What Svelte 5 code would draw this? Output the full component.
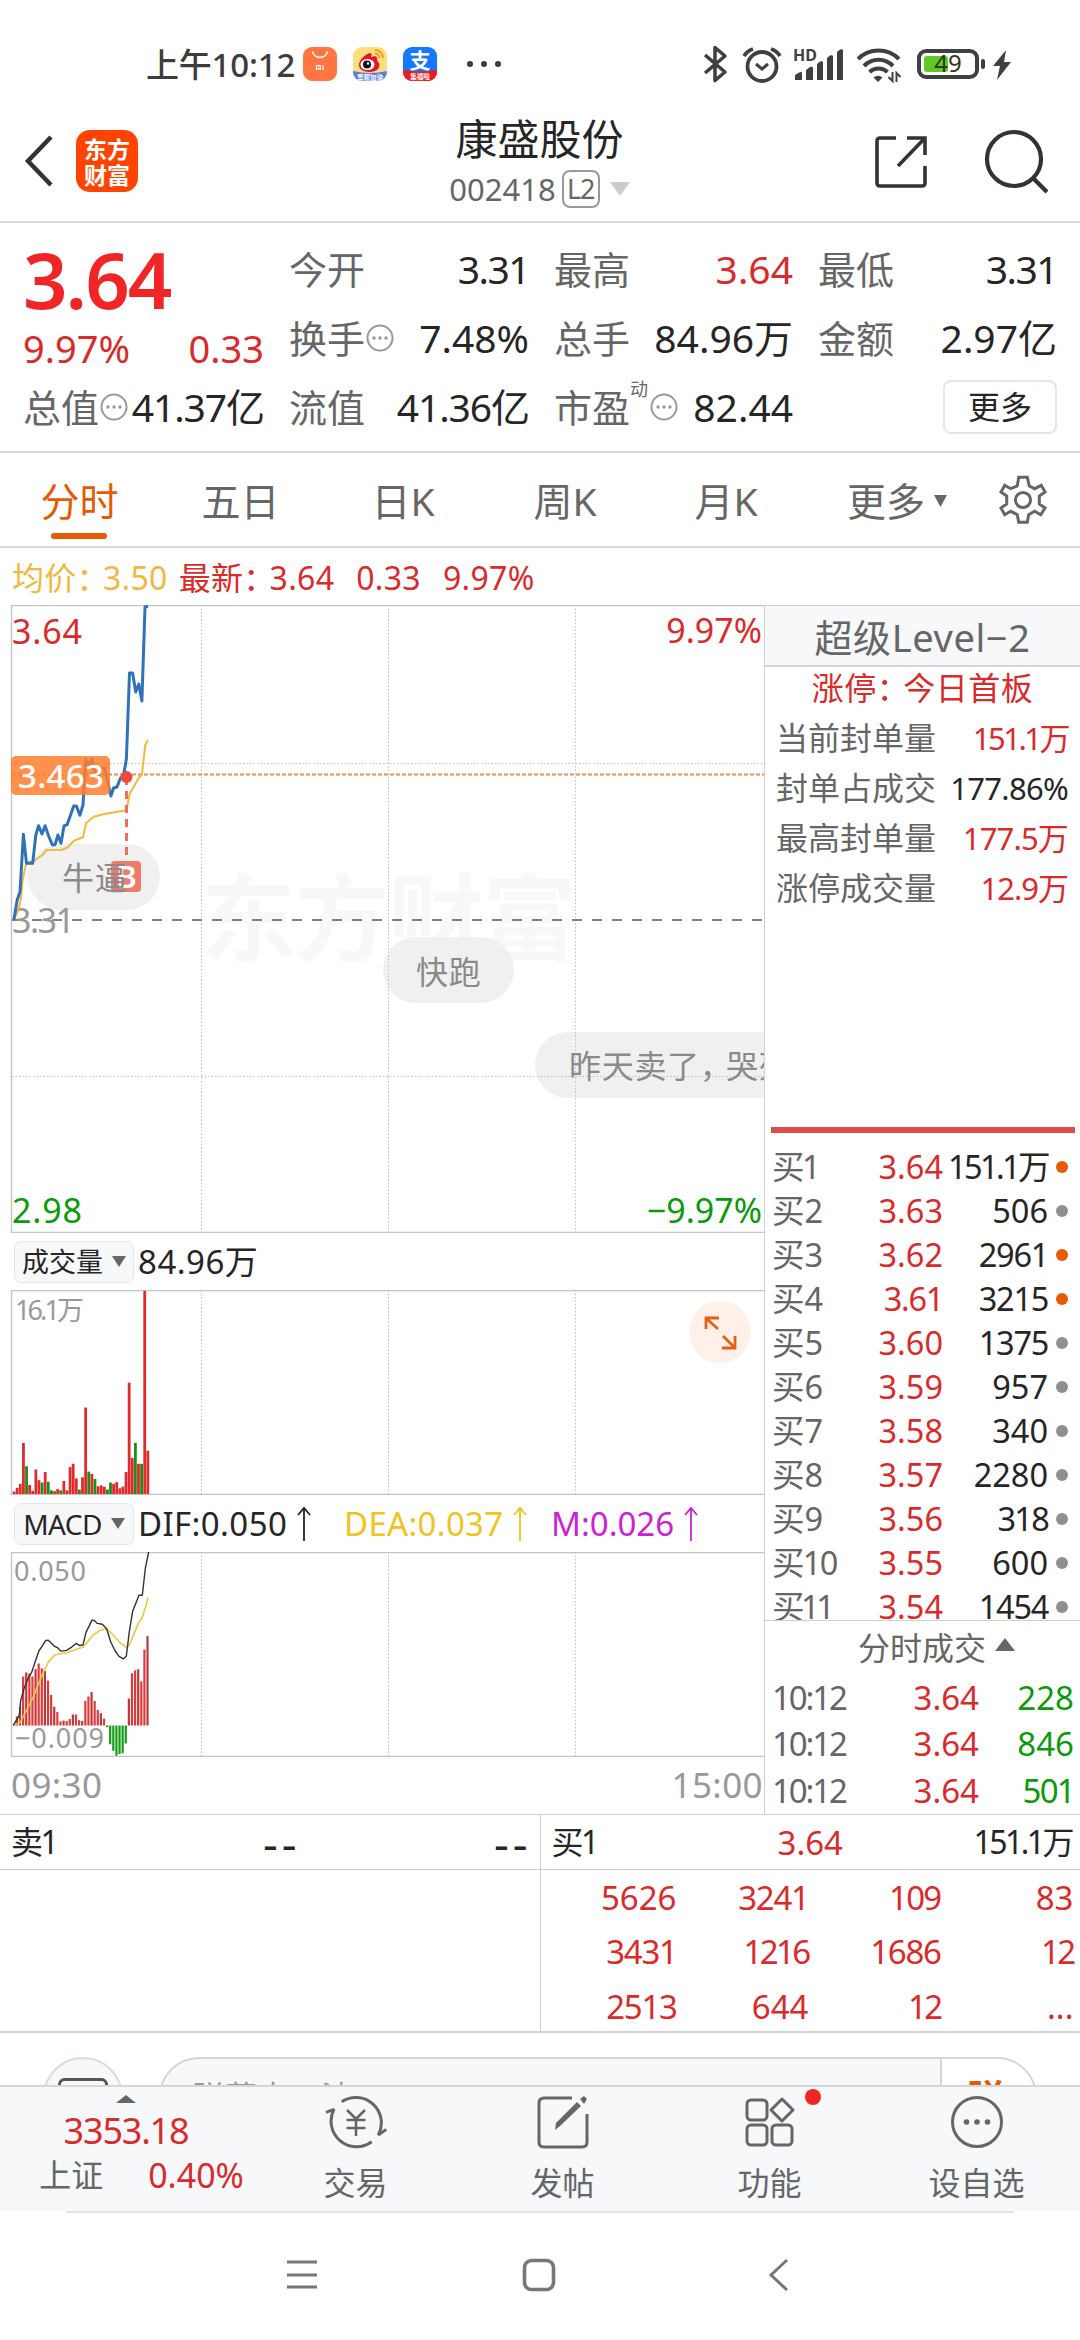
<script>
	const quotes = [
		{ label: '今开', value: '3.31' },
		{ label: '最高', value: '3.64', red: true },
		{ label: '最低', value: '3.31' },
		{ label: '换手', value: '7.48%', info: true },
		{ label: '总手', value: '84.96万' },
		{ label: '金额', value: '2.97亿' },
		{ label: '总值', value: '41.37亿', info: true },
		{ label: '流值', value: '41.36亿' },
		{ label: '市盈', value: '82.44', info: true, sup: '动' }
	];

	const periods = ['分时', '五日', '日K', '周K', '月K'];

	const level2 = [
		{ label: '当前封单量', value: '151.1万', red: true },
		{ label: '封单占成交', value: '177.86%' },
		{ label: '最高封单量', value: '177.5万', red: true },
		{ label: '涨停成交量', value: '12.9万', red: true }
	];

	const bids = [
		['3.64', '151.1万', true],
		['3.63', '506'],
		['3.62', '2961', true],
		['3.61', '3215', true],
		['3.60', '1375'],
		['3.59', '957'],
		['3.58', '340'],
		['3.57', '2280'],
		['3.56', '318'],
		['3.55', '600'],
		['3.54', '1454']
	];

	const ticks = [
		['10:12', '3.64', '228'],
		['10:12', '3.64', '846'],
		['10:12', '3.64', '501']
	];

	const queue = ['5626', '3241', '109', '83', '3431', '1216', '1686', '12', '2513', '644', '12', '...'];

	const priceLine =
		'13.8,315 17.2,295 20,286.7 23.4,229.3 26.5,258.3 32.7,258.3 35.8,230 38.6,220.7 42,229 45.1,220.7 48.6,231 52.3,239.7 55.1,239.7 57.9,230 61,238.3 64,221 67.1,219.7 70.2,211 73.7,201 76.4,201 79.9,210.3 83,200 85.7,154.3 88.8,160 92,154.3 95.4,168 98.5,172 101.6,163 104.7,163 107.8,177 110.9,191 113.6,183 117,182 120.5,173 123.3,172 126.4,154 129.5,68 132.6,68 135.7,87 138.8,79 141.9,96 145,2 148,1.5';
	const avgLine =
		'13.8,315 18.3,305 20.7,295 22.7,275 25.8,260 29.3,256.7 34.4,255.7 42,250.3 46.5,245 62,244.7 67.1,242.7 74,235.7 83,232.3 86,218.3 93.7,211.7 103.3,209.3 126.4,205.3 129.8,188.3 134.3,181 138.4,173.3 141.9,170 145.3,140 148,135';

	// negative volume = falling minute
	const volumes = [
		6, 15, 25, 125, -68, 22, 8, 60, 34, -28, 54, -30, -9, 7, 12, -9, 32, 9, 66, 74, 38, -11, 41, 212, -55, 49, -37,
		19, 21, 18, -11, -28, 25, 29, 14, 18, 54, 273, 88, -125, 74, -74, 498, 106
	];
	const macd = [
		2, 22, 45, 120, 130, 127, 120, 138, 152, 140, 134, 110, 75, 46, 33, 10, 12, 11, 16, 27, 27, 13, 11, 60, 71, 82,
		60, 38, 30, 17, -4, -46, -62, -74, -70, -68, -44, 66, 128, 135, 138, 108, 186, 219
	];
	const dif =
		'40,425 58,400 62,365 72,335 85,308 95,295 105,270 117,242 127,230 137,217 145,216 165,232 172,234 183,243 200,241 215,233 229,224 238,229 249,228 258,197 276,167 283,168 292,175 307,177 320,188 332,220 345,242 357,256 370,262 379,255 388,195 398,145 417,106 427,106 436,40 446,0';
	const dea =
		'40,425 60,418 75,395 100,355 128,298 145,270 165,252 200,247 250,233 280,203 300,192 320,188 340,204 360,222 380,234 388,228 415,175 427,160 438,132 444,112';

	const barX = (i) => 12.7 + i * 3.11;
	const barScale = 0.408;

	// the digit 1 is set narrower than the others
	function tracking(s) {
		const ones = s.split('1').length - 1;
		return `${((-0.16 * ones) / s.length).toFixed(3)}em`;
	}
</script>

{#snippet num(s)}<span class="num" style:letter-spacing={tracking(s)}>{s}</span>{/snippet}

{#snippet arrow()}
	<svg class="arrow" width="14" height="36" viewBox="0 0 14 36" fill="none" stroke="currentColor" stroke-width="1.8">
		<path d="M7 35V3M1 9l6-7 6 7" />
	</svg>
{/snippet}

{#snippet grid(h)}
	<g class="dots">
		<path d={`M201.5 0V${h}M388.5 0V${h}M575.5 0V${h}`} />
	</g>
	<path class="frame" d={`M764 .5H11.5V${h - 0.5}H764`} />
{/snippet}

<div class="screen">
	<div class="status">
		<span class="clock">上午10:12</span>
		<div class="apps">
			<svg width="34" height="34" viewBox="0 0 34 34">
				<rect width="34" height="34" rx="9" fill="#ff7643" />
				<path d="M9.5 4.5a7.6 7 0 0 0 15 0" fill="none" stroke="#fff" stroke-width="1.6" />
				<path d="M13.5 23v-4.5h3.7V23M15.4 20.5V23M20 18.2V23" fill="none" stroke="#fff" stroke-width="1.2" />
			</svg>
			<svg width="34" height="34" viewBox="0 0 34 34">
				<defs><clipPath id="wb"><rect width="34" height="34" rx="9" /></clipPath></defs>
				<g clip-path="url(#wb)">
					<rect width="34" height="34" fill="#ffdf7c" />
					<path d="M0 24q17 4 34 0v10H0z" fill="#5b7fe0" />
					<path d="M6 17c1-5 7-10 11-11 2 0 2 2 1 4 3-1 6-1 6 1s0 3 2 5c2 7-5 9-10 9S5 22 6 17z" fill="#e6162d" />
					<ellipse cx="14.5" cy="17.5" rx="7" ry="5.6" fill="#fff" />
					<circle cx="14" cy="17.5" r="4" fill="#111" />
					<circle cx="15" cy="16.5" r="1.2" fill="#fff" />
					<path d="M22 3a8 8 0 0 1 8 8M22 6.5a5 5 0 0 1 4.5 4.5" fill="none" stroke="#f59b23" stroke-width="2" />
					<text x="17" y="32.5" text-anchor="middle" class="tiny">票帮加油</text>
				</g>
			</svg>
			<svg width="34" height="34" viewBox="0 0 34 34">
				<defs><clipPath id="zf"><rect width="34" height="34" rx="9" /></clipPath></defs>
				<g clip-path="url(#zf)">
					<rect width="34" height="34" fill="#1677ff" />
					<path d="M0 23q17 3 34 0v11H0z" fill="#f01a1a" />
					<text x="17" y="20.5" text-anchor="middle" class="zhi">支</text>
					<text x="17" y="32" text-anchor="middle" class="tiny">集福啦</text>
				</g>
			</svg>
		</div>
		<svg class="more-dots" width="36" height="8" viewBox="0 0 36 8" fill="#3c3c3c">
			<circle cx="4" cy="4" r="3" /><circle cx="18" cy="4" r="3" /><circle cx="32" cy="4" r="3" />
		</svg>
		<div class="system">
			<svg width="28" height="40" viewBox="0 0 28 40" fill="none" stroke="#404040" stroke-width="3.6" stroke-linejoin="round">
				<path d="M3 11l20 17-10 8.5V3.5L23 12 3 29" />
			</svg>
			<svg width="42" height="40" viewBox="0 0 42 40" fill="none" stroke="#404040" stroke-width="3.8">
				<circle cx="21" cy="22.5" r="14.5" />
				<path d="M15 20l6 5 6-5" stroke-width="3" />
				<path d="M3 12q3-5 9-7M39 12q-3-5-9-7" />
			</svg>
			<svg width="50" height="40" viewBox="0 0 50 40" fill="#404040">
				<text x="-1" y="17" class="hd">HD</text>
				<path d="M1 31l5-3q2-.5 2 1v7H1zM12 26l4-3q3-1 3 1v12h-7zM23 20l3-2.5q3-1 3 1V36h-6zM33 14l3-2.5q3-1 3 1V36h-6zM43 8l3-2.5q3-1 3 1V36h-6z" />
			</svg>
			<svg width="48" height="40" viewBox="0 0 48 40" fill="none" stroke="#404040" stroke-width="4">
				<path d="M3 15a29 29 0 0 1 41 0M9 22a20 20 0 0 1 29 0M14.5 28a13 13 0 0 1 18 0" />
				<path d="M18.5 33.500a7 7 0 0 1 9 0l-4.500 4.500z" fill="#404040" stroke="none" />
				<path d="M37.500 28v9l-4-4M41.500 38v-9l4 4" stroke-width="2" />
			</svg>
			<svg width="100" height="40" viewBox="0 0 100 40">
				<rect x="5" y="7" width="58" height="26" rx="7" fill="none" stroke="#404040" stroke-width="4" />
				<rect x="10" y="12" width="24" height="16" rx="3" fill="#63c728" />
				<rect x="67" y="15" width="4" height="10" rx="2" fill="#404040" />
				<text x="34" y="28" text-anchor="middle" class="pct">49</text>
				<path d="M92 6L79 22h7l-3 14 14-18h-7z" fill="#404040" />
			</svg>
		</div>
	</div>

	<header>
		<svg class="back" width="30" height="52" viewBox="0 0 30 52" fill="none" stroke="#333" stroke-width="4.5">
			<path d="M27 2L4 26l23 24" />
		</svg>
		<div class="logo"><span>东方</span><span>财富</span></div>
		<div class="title">
			<h1>康盛股份</h1>
			<div class="code">
				<span>002418</span><span class="l2">L2</span>
				<svg width="20" height="14" viewBox="0 0 20 14"><path d="M0 0h20L10 14z" fill="#ccc" /></svg>
			</div>
		</div>
		<div class="actions">
			<svg width="54" height="54" viewBox="0 0 54 54" fill="none" stroke="#333" stroke-width="3.6">
				<path d="M22 3H6Q3 3 3 6v42q0 3 3 3h42q3 0 3-3V31M33 3h18v17M51 3L24 31" />
			</svg>
			<svg width="64" height="68" viewBox="0 0 64 68" fill="none" stroke="#333" stroke-width="4.2">
				<circle cx="30" cy="31" r="27" /><path d="M49 50l14 14" />
			</svg>
		</div>
	</header>

	<section class="quote">
		<div class="last">
			<strong>3.64</strong>
			<div class="change"><span>9.97%</span><span>0.33</span></div>
		</div>
		{#each quotes as q}
			<div class="cell">
				<span class="label">{q.label}</span>{#if q.sup}<sup>{q.sup}</sup>{/if}{#if q.info}
					<svg class="info" width="28" height="28" viewBox="0 0 28 28">
						<circle cx="14" cy="14" r="12.5" fill="none" stroke="#999" stroke-width="2" />
						<g fill="#999"><circle cx="8" cy="14" r="1.7" /><circle cx="14" cy="14" r="1.7" /><circle cx="20" cy="14" r="1.7" /></g>
					</svg>
				{/if}
				<span class="value" class:red={q.red}>{@render num(q.value)}</span>
			</div>
		{/each}
		<div class="cell end"><button class="more">更多</button></div>
	</section>

	<nav class="periods">
		{#each periods as p, i}
			<button class:active={i === 0}>{p}</button>
		{/each}
		<button class="drop">更多<svg width="13" height="12" viewBox="0 0 13 12"><path d="M0 0h13L6.5 12z" fill="#666" /></svg></button>
		<svg class="gear" width="50" height="50" viewBox="0 0 50 50" fill="none" stroke="#666" stroke-width="3">
			<path d="M20.700 2.300h8.600L31.300 11l5.400 2.700 6.600-3.400L47 17l-5.700 4v8l5.700 4-4.300 6.700-6-3.400-6 3.400-1.400 7.600h-8.600l-1.400-7.600-6.600-3.400-6 3.400L3 33l5.700-4v-8L3 17l3.700-6.700 6 3.400 6.600-2.700z" />
			<circle cx="25" cy="25" r="7.600" />
		</svg>
	</nav>

	<div class="legend">
		<span class="avg">均价<i>：</i>3.50</span>
		<span class="red">最新<i>：</i>3.64</span>
		<span class="red">0.33</span>
		<span class="red">9.97%</span>
	</div>

	<main>
		<div class="charts">
			<svg class="chart" width="764" height="628" viewBox="0 0 764 628">
				<text x="201" y="349" class="watermark" textLength="376">东方财富</text>
				<g class="bullets">
					<rect x="28" y="239" width="132" height="66" rx="33" />
					<rect x="383" y="332" width="131" height="66" rx="33" />
					<rect x="535" y="427" width="300" height="66" rx="33" />
				</g>
				{@render grid(628)}
				<path class="dots" d="M12 158.5H764M12 471.5H764" />
				<path d="M12 315H764" stroke="#808080" stroke-width="2" stroke-dasharray="10 10" />
				<path d="M12 169.5H764" stroke="#e2935a" stroke-width="1.8" stroke-dasharray="4 2" />
				<text x="12" y="328" class="axis" fill="#999" textLength="63">3.31</text>
				<polyline points={avgLine} class="line" stroke="#f2b93b" stroke-width="2" />
				<polyline points={priceLine} class="line" stroke="#2f72ba" stroke-width="3" />
				<path d="M126.5 172V256" stroke="#ec6f60" stroke-width="3" stroke-dasharray="8 6" />
				<circle cx="126.5" cy="172" r="6" fill="#f04a3f" />
				<rect x="111" y="256" width="30" height="31" rx="4" fill="#f07b6b" />
				<text x="126.5" y="283" text-anchor="middle" class="buy">B</text>
				<g class="bullet-text">
					<text x="62" y="285">牛逼</text>
					<text x="416" y="379">快跑</text>
					<text x="569" y="473">昨天卖了，</text>
					<text x="726" y="473">哭死</text>
				</g>
				<rect x="11" y="151" width="99" height="39" rx="5" fill="#ff7f2e" fill-opacity=".86" />
				<text x="18" y="183" fill="#fff" class="tag" textLength="86">3.463</text>
				<text x="12" y="39" class="axis red" textLength="70">3.64</text>
				<text x="762" y="38" class="axis red" text-anchor="end">9.97%</text>
				<text x="12" y="618" class="axis green" textLength="70">2.98</text>
				<text x="762" y="618" class="axis green" text-anchor="end">−9.97%</text>
			</svg>

			<div class="indicator">
				<button>成交量<svg width="14" height="11" viewBox="0 0 14 11"><path d="M0 0h14L7 11z" fill="#666" /></svg></button>
				<span class="total">84.96万</span>
			</div>
			<svg class="chart" width="764" height="205" viewBox="0 0 764 205">
				{@render grid(205)}
				<text x="15" y="30" class="scale" textLength="69">16.1万</text>
				{#each volumes as v, i}
					<rect x={barX(i)} y={204 - Math.abs(v) * barScale} width="2.8" height={Math.abs(v) * barScale} fill={v < 0 ? '#1b8f1b' : '#e02b2b'} />
				{/each}
				<circle cx="720" cy="42" r="31" fill="#fff1e9" />
				<path d="M706 39V28h13M707 29l11 10M723 46l11 11M735 46v12h-13" fill="none" stroke="#e2600f" stroke-width="2.8" />
			</svg>

			<div class="indicator">
				<button class="macd">MACD<svg width="14" height="11" viewBox="0 0 14 11"><path d="M0 0h14L7 11z" fill="#666" /></svg></button>
				<span class="dif">DIF:0.050{@render arrow()}</span>
				<span class="dea">DEA:0.037{@render arrow()}</span>
				<span class="m">M:0.026{@render arrow()}</span>
			</div>
			<svg class="chart" width="764" height="205" viewBox="0 0 764 205">
				{@render grid(205)}
				<text x="14" y="29" class="scale" textLength="72">0.050</text>
				<text x="15" y="196" class="scale" textLength="89">−0.009</text>
				{#each macd as v, i}
					<rect x={barX(i)} y={v < 0 ? 173.5 : 173.5 - v * barScale} width="2.2" height={Math.abs(v) * barScale} fill={v < 0 ? '#159c15' : i % 3 === 1 ? '#b93a3a' : '#e03a3a'} />
				{/each}
				<g transform="scale(.3333 .408)" class="line">
					<polyline points={dea} stroke="#e8c93c" stroke-width="1.6" />
					<polyline points={dif} stroke="#333" stroke-width="1.4" />
				</g>
			</svg>
			<div class="hours"><span>09:30</span><span>15:00</span></div>
		</div>

		<aside>
			<div class="side-title">超级Level−2</div>
			<div class="board">涨停<i>：</i>今日首板</div>
			{#each level2 as row}
				<div class="level-row">
					<span>{row.label}</span>
					<b class:red={row.red}>{@render num(row.value)}</b>
				</div>
			{/each}
			<div class="divider"></div>
			<div class="bids">
				{#each bids as [price, vol, big], i}
					<div class="bid">
						<span class="grey">{@render num('买' + (i + 1))}</span>
						<span class="red">{@render num(price)}</span>
						<span>{@render num(vol)}</span>
						<em class:big></em>
					</div>
				{/each}
			</div>
			<div class="ticks">
				<div class="ticks-title">分时成交<svg width="20" height="13" viewBox="0 0 20 13"><path d="M0 13h20L10 0z" fill="#666" /></svg></div>
				{#each ticks as [time, price, vol]}
					<div class="tick">
						<span class="grey">{@render num(time)}</span>
						<span class="red">{@render num(price)}</span>
						<span class="green">{@render num(vol)}</span>
					</div>
				{/each}
			</div>
		</aside>
	</main>

	<section class="depth">
		<div class="side">
			<div class="depth-head"><span>{@render num('卖1')}</span><span class="dash">--</span><span class="dash">--</span></div>
		</div>
		<div class="side buy-side">
			<div class="depth-head">
				<span>{@render num('买1')}</span><span class="red">3.64</span><span>{@render num('151.1万')}</span>
			</div>
			<div class="queue">
				{#each queue as q}<span>{@render num(q)}</span>{/each}
			</div>
		</div>
	</section>

	<div class="comment">
		<div class="round">
			<svg width="50" height="38" viewBox="0 0 50 38" fill="none" stroke="#555" stroke-width="3"><rect x="1.5" y="1.5" width="47" height="34" rx="5" /></svg>
		</div>
		<div class="input">
			<span>弹幕来一波</span>
			<b>弹</b>
		</div>
	</div>

	<footer>
		<div class="index">
			<svg width="20" height="8" viewBox="0 0 20 8"><path d="M0 8h20L10 0z" fill="#666" /></svg>
			<span class="points">3353.18</span>
			<div class="index-row"><span>上证</span><span class="pc">0.40%</span></div>
		</div>
		<div class="item">
			<svg width="62" height="56" viewBox="0 0 62 56" fill="none" stroke="#666" stroke-width="3">
				<path d="M16.700 7.700A25.500 25.500 0 0 1 53.300 41l8-5.500M46.700 47.700A25.500 25.500 0 0 1 9 15.300l-8 3" stroke-linejoin="bevel" />
				<path d="M22 16l9 9 9-9M21.500 26h19M21.500 34h19M31 25v17" stroke-width="2.600" />
			</svg>
			<span>交易</span>
		</div>
		<div class="item">
			<svg width="56" height="56" viewBox="0 0 56 56" fill="none" stroke="#666" stroke-width="3">
				<path d="M37 4H9Q4 4 4 9v39q0 5 5 5h38q5 0 5-5V20" />
				<path d="M20 36l1-7L42 8l4 4-21 20z" fill="#666" stroke="none" />
				<path d="M45 5l4-3 3 3-3 5z" fill="#666" stroke="none" />
			</svg>
			<span>发帖</span>
		</div>
		<div class="item">
			<svg width="56" height="56" viewBox="0 0 56 56" fill="none" stroke="#666" stroke-width="3">
				<rect x="5" y="6" width="20" height="20" rx="4" />
				<rect x="5" y="31" width="20" height="20" rx="4" />
				<rect x="30" y="31" width="20" height="20" rx="4" />
				<path d="M40 5l11 11-11 11-11-11z" stroke-linejoin="round" />
			</svg>
			<span>功能</span>
			<i class="badge"></i>
		</div>
		<div class="item">
			<svg width="56" height="56" viewBox="0 0 56 56" fill="none" stroke="#666" stroke-width="3">
				<circle cx="28" cy="28" r="24.5" />
				<g fill="#666" stroke="none"><circle cx="17.5" cy="28" r="2.8" /><circle cx="28" cy="28" r="2.8" /><circle cx="38.5" cy="28" r="2.8" /></g>
			</svg>
			<span>设自选</span>
		</div>
	</footer>

	<div class="system-nav">
		<svg width="32" height="34" viewBox="0 0 32 34" stroke="#777" stroke-width="3.2"><path d="M1 4h30M1 17h30M1 29h30" /></svg>
		<svg width="34" height="34" viewBox="0 0 34 34" fill="none" stroke="#777" stroke-width="3.6"><rect x="2.5" y="2.5" width="29" height="29" rx="7" /></svg>
		<svg width="34" height="34" viewBox="0 0 34 34" fill="none" stroke="#777" stroke-width="3"><path d="M27 2L11 17l16 15" /></svg>
	</div>
</div>

<style>
	:global(body) {
		margin: 0;
		background: #fff;
	}
	.screen {
		width: 1080px;
		height: 2340px;
		overflow: hidden;
		display: flex;
		flex-direction: column;
		background: #fff;
		color: #262626;
		font-family: 'Noto Sans', 'Noto Sans CJK SC', sans-serif;
		line-height: 1;
	}
	svg {
		display: block;
		flex: none;
	}
	span {
		white-space: nowrap;
	}
	button {
		font: inherit;
		color: inherit;
		background: none;
		border: 0;
		padding: 0;
	}
	i, em {
		font-style: normal;
	}
	.red {
		color: #d92b2b;
		fill: #d92b2b;
	}
	.green {
		color: #0a9a0a;
		fill: #0a9a0a;
	}
	.grey {
		color: #666;
	}

	.status {
		height: 128px;
		box-sizing: border-box;
		padding: 0 66px 0 146px;
		display: flex;
		align-items: center;
		flex: none;
	}
	.clock {
		font-size: 33px;
		letter-spacing: -0.2px;
		width: 157px;
		color: #3c3c3c;
		font-weight: 500;
	}
	.apps {
		display: flex;
		gap: 16px;
	}
	.more-dots {
		margin-left: 29px;
	}
	.system {
		display: flex;
		gap: 11px;
		margin-left: auto;
	}
	.tiny {
		font-size: 6.5px;
		font-weight: 700;
		fill: #fff;
	}
	.zhi {
		font-size: 21px;
		font-weight: 700;
		fill: #fff;
	}
	.hd {
		font-size: 16px;
		font-weight: 700;
	}
	.pct {
		font-size: 24px;
		fill: #263a1c;
	}

	header {
		height: 95px;
		box-sizing: border-box;
		border-bottom: 2px solid #d9d9d9;
		display: flex;
		align-items: flex-start;
		padding: 0 32px 0 24px;
		flex: none;
	}
	.back {
		margin: 7px 22px 0 0;
	}
	.logo {
		width: 62px;
		height: 62px;
		margin-top: 2px;
		border-radius: 14px;
		background: #ff4400;
		color: #fff;
		font: 700 23px/26px 'Noto Sans CJK SC', sans-serif;
		display: flex;
		flex-direction: column;
		align-items: center;
		justify-content: center;
	}
	.title {
		flex: 1;
		display: flex;
		flex-direction: column;
		align-items: center;
		padding-left: 67px;
		margin-top: -12px;
		gap: 8px;
	}
	h1 {
		margin: 0;
		font-size: 42px;
		font-weight: 400;
		line-height: 46px;
	}
	.code {
		display: flex;
		align-items: center;
		font-size: 31px;
		color: #666;
		gap: 6px;
		height: 38px;
	}
	.code svg {
		margin-left: 4px;
	}
	.l2 {
		width: 34px;
		height: 34px;
		line-height: 34px;
		border: 2px solid #999;
		border-radius: 8px;
		text-align: center;
		font-size: 27px;
		letter-spacing: -1px;
	}
	.actions {
		display: flex;
		align-items: center;
		gap: 56px;
	}

	.quote {
		height: 230px;
		box-sizing: border-box;
		padding: 11px 21px 0 23px;
		border-bottom: 2px solid #d9d9d9;
		display: grid;
		grid-template-columns: 241px 240px 239px 239px;
		grid-template-rows: 69px 69px 69px;
		column-gap: 25px;
		font-size: 38px;
		flex: none;
	}
	.last {
		grid-row: 1 / 3;
		color: #f12525;
	}
	.last strong {
		display: block;
		font-size: 78px;
		line-height: 90px;
		letter-spacing: -2px;
		font-weight: 600;
	}
	.change {
		display: flex;
		justify-content: space-between;
		line-height: 44px;
		color: #d92b2b;
		margin-top: 2px;
	}
	.cell {
		display: flex;
		align-items: center;
	}
	.label {
		color: #666;
	}
	.info {
		margin-left: 1px;
	}
	sup {
		font-size: 18px;
		color: #666;
		align-self: flex-start;
		margin-top: 8px;
		margin-right: 1px;
	}
	.value {
		margin-left: auto;
		font-size: 39px;
	}
	.end {
		justify-content: flex-end;
	}
	.more {
		width: 114px;
		height: 54px;
		border: 2px solid #e6e6e6;
		border-radius: 8px;
		font-size: 32px;
	}

	.periods {
		height: 95px;
		box-sizing: border-box;
		border-bottom: 2px solid #d9d9d9;
		display: grid;
		grid-template-columns: 159px 163px 162px 162px 160px 178px 1fr;
		justify-items: center;
		align-items: center;
		font-size: 39px;
		color: #666;
		flex: none;
	}
	.periods button {
		height: 93px;
		box-sizing: border-box;
		padding-top: 2px;
		position: relative;
		white-space: nowrap;
	}
	.periods .active {
		color: #e65a05;
	}
	.active::after {
		content: '';
		position: absolute;
		left: 50%;
		bottom: 7px;
		width: 56px;
		height: 6px;
		margin-left: -28px;
		border-radius: 3px;
		background: #e65a05;
	}
	.drop {
		display: flex;
		align-items: center;
		gap: 9px;
		padding-left: 4px;
	}
	.gear {
		margin-right: 18px;
	}

	.legend {
		height: 57px;
		box-sizing: border-box;
		display: flex;
		align-items: center;
		padding: 2px 0 0 12px;
		gap: 22px;
		font-size: 32px;
		letter-spacing: 0.3px;
		flex: none;
	}
	.legend i, .board i {
		margin-right: -6px;
	}
	.avg {
		color: #f0b840;
		margin-right: -11px;
	}

	main {
		display: flex;
		height: 1209px;
		flex: none;
	}
	.charts {
		width: 764px;
	}
	.chart {
		overflow: hidden;
	}
	.dots {
		stroke: #bdbdbd;
		stroke-width: 1;
		stroke-dasharray: 1.5 2;
	}
	.frame {
		fill: none;
		stroke: #c4c4c4;
		stroke-width: 1.4;
	}
	.line {
		fill: none;
		stroke-linejoin: round;
	}
	.line polyline {
		vector-effect: non-scaling-stroke;
	}
	.watermark {
		font: 700 95px 'Noto Sans CJK SC', sans-serif;
		fill: #f8f8f8;
	}
	.bullets {
		fill: #f0f0f0;
	}
	.bullet-text {
		font-size: 32px;
		letter-spacing: 0.7px;
		fill: #8a8a8a;
	}
	.axis {
		font-size: 34px;
	}
	.tag {
		font-size: 33px;
		font-weight: 500;
	}
	.buy {
		font-size: 31px;
		font-weight: 600;
		fill: #fff;
	}
	.scale {
		font-size: 27px;
		fill: #999;
	}
	.indicator {
		height: 57px;
		display: flex;
		align-items: center;
		padding-left: 14px;
		font-size: 33px;
		gap: 4px;
	}
	.indicator button {
		width: 120px;
		height: 42px;
		box-sizing: border-box;
		border: 1.5px solid #e6e6ea;
		border-radius: 7px;
		background: #f7f8fa;
		font-size: 27px;
		display: flex;
		align-items: center;
		justify-content: center;
		gap: 9px;
	}
	.indicator .macd {
		font-size: 28px;
		letter-spacing: -0.6px;
	}
	.indicator span {
		display: flex;
		align-items: center;
	}
	.total {
		letter-spacing: 0.5px;
	}
	.arrow {
		margin-left: 10px;
	}
	.dif {
		width: 202px;
		letter-spacing: 0.4px;
	}
	.dea {
		width: 203px;
		color: #f0c420;
		letter-spacing: 0.3px;
	}
	.m {
		color: #cc22d4;
	}
	.hours {
		height: 54px;
		padding: 0 1px 3px 11px;
		display: flex;
		justify-content: space-between;
		align-items: center;
		font-size: 35px;
		letter-spacing: 0.4px;
		color: #999;
	}

	aside {
		width: 316px;
		height: 1209px;
		box-sizing: border-box;
		border-left: 1.5px solid #d0d0d0;
		border-top: 1.5px solid #d0d0d0;
		font-size: 32px;
		overflow: hidden;
	}
	.side-title {
		height: 61px;
		box-sizing: border-box;
		background: #f6f8fa;
		border-bottom: 2px solid #d3d7db;
		font-size: 38px;
		line-height: 62px;
		text-align: center;
		color: #666;
		letter-spacing: 0.6px;
	}
	.board {
		height: 46px;
		line-height: 42px;
		text-align: center;
		color: #d92b2b;
		letter-spacing: 0.5px;
	}
	.level-row {
		height: 50px;
		padding: 0 12px 0 11px;
		display: flex;
		justify-content: space-between;
		align-items: center;
		color: #666;
	}
	.level-row b {
		font-weight: 400;
		font-size: 31px;
		letter-spacing: 0.3px;
		color: #262626;
	}
	.level-row b.red {
		color: #d92b2b;
	}
	.divider {
		height: 6px;
		margin: 214px 5px 0 6px;
		background: #e14a4a;
	}
	.bids {
		height: 475px;
		margin-top: 12px;
		overflow: hidden;
	}
	.bid {
		height: 44px;
		display: grid;
		grid-template-columns: 78px 93px 105px 12px;
		padding-left: 7px;
		align-items: center;
		font-size: 32.5px;
	}
	.bid span:not(:first-child) {
		text-align: right;
	}
	.bid em {
		width: 12px;
		height: 12px;
		border-radius: 50%;
		background: #8e8e93;
		margin-left: 8px;
	}
	.bid em.big {
		background: #e65a05;
	}
	.ticks {
		border-top: 1.5px solid #d0d0d0;
	}
	.ticks-title {
		height: 53px;
		display: flex;
		align-items: center;
		justify-content: center;
		gap: 9px;
		color: #666;
		padding-left: 28px;
	}
	.ticks-title svg {
		margin-top: -6px;
	}
	.tick {
		height: 46.5px;
		display: grid;
		grid-template-columns: 90px 117px 95px;
		padding-left: 7px;
		align-items: center;
		font-size: 33px;
	}
	.tick span:not(:first-child) {
		text-align: right;
	}

	.depth {
		height: 219px;
		box-sizing: border-box;
		border-top: 1.5px solid #d0d0d0;
		border-bottom: 2px solid #d3d3d3;
		display: flex;
		flex: none;
	}
	.side {
		flex: 1;
	}
	.buy-side {
		border-left: 1.5px solid #d0d0d0;
	}
	.depth-head {
		height: 55px;
		box-sizing: border-box;
		border-bottom: 1.5px solid #d0d0d0;
		padding: 0 8px 0 11px;
		display: grid;
		grid-template-columns: 120px 1fr 120px;
		align-items: center;
		font-size: 32px;
	}
	.depth-head > span:nth-child(2) {
		text-align: right;
		padding-right: 111px;
	}
	.depth-head > span:last-child {
		text-align: right;
	}
	.buy-side .depth-head > span:nth-child(2) {
		padding-right: 109px;
		font-size: 33px;
	}
	.dash {
		font-size: 46px;
		letter-spacing: 4px;
	}
	.queue {
		display: grid;
		grid-template-columns: 136px 132px 132px 133px;
		grid-auto-rows: 54.5px;
		align-items: center;
		justify-items: end;
		font-size: 33px;
		color: #d92b2b;
	}

	.comment {
		height: 52px;
		box-sizing: border-box;
		overflow: hidden;
		padding: 24px 43px 0 43px;
		display: flex;
		gap: 36px;
		flex: none;
	}
	.round {
		width: 76px;
		height: 76px;
		border: 2px solid #d8dbe0;
		border-radius: 50%;
		background: #f6f8fa;
		display: flex;
		align-items: center;
		justify-content: center;
		flex: none;
	}
	.input {
		flex: 1;
		height: 80px;
		box-sizing: border-box;
		border: 2px solid #d3d7db;
		border-radius: 40px;
		background: #f6f8fa;
		display: flex;
		overflow: hidden;
		font-size: 32px;
		line-height: 76px;
		color: #999;
	}
	.input span {
		flex: 1;
		padding-left: 32px;
	}
	.input b {
		width: 93px;
		background: #fff;
		border-left: 2px solid #d3d7db;
		color: #e65a05;
		font-size: 38px;
		line-height: 76px;
		text-align: center;
		text-indent: -4px;
		font-weight: 700;
	}

	footer {
		height: 126px;
		box-sizing: border-box;
		border-top: 2px solid #d3d7db;
		background: #f6f8fa;
		display: grid;
		grid-template-columns: 252px 207px 207px 207px 207px;
		color: #666;
		font-size: 32px;
		flex: none;
	}
	.index {
		display: flex;
		flex-direction: column;
		align-items: center;
		padding-top: 8px;
	}
	.points {
		font-size: 36px;
		line-height: 44px;
		margin-top: 6px;
		letter-spacing: -1.2px;
		color: #d92b2b;
	}
	.index-row {
		display: flex;
		align-items: center;
		gap: 45px;
		height: 44px;
		padding-left: 31px;
	}
	.pc {
		font-size: 34px;
		color: #d92b2b;
	}
	.item {
		display: flex;
		flex-direction: column;
		align-items: center;
		padding-top: 7px;
		position: relative;
	}
	.item span {
		margin-top: 17px;
	}
	.badge {
		position: absolute;
		left: 139px;
		top: 2px;
		width: 16px;
		height: 16px;
		border-radius: 50%;
		background: #f22525;
	}

	.system-nav {
		flex: 1;
		margin: 0 66px;
		padding-bottom: 4px;
		border-top: 2px solid #e3e5e8;
		display: flex;
		justify-content: center;
		align-items: center;
		gap: 204px;
	}
</style>
